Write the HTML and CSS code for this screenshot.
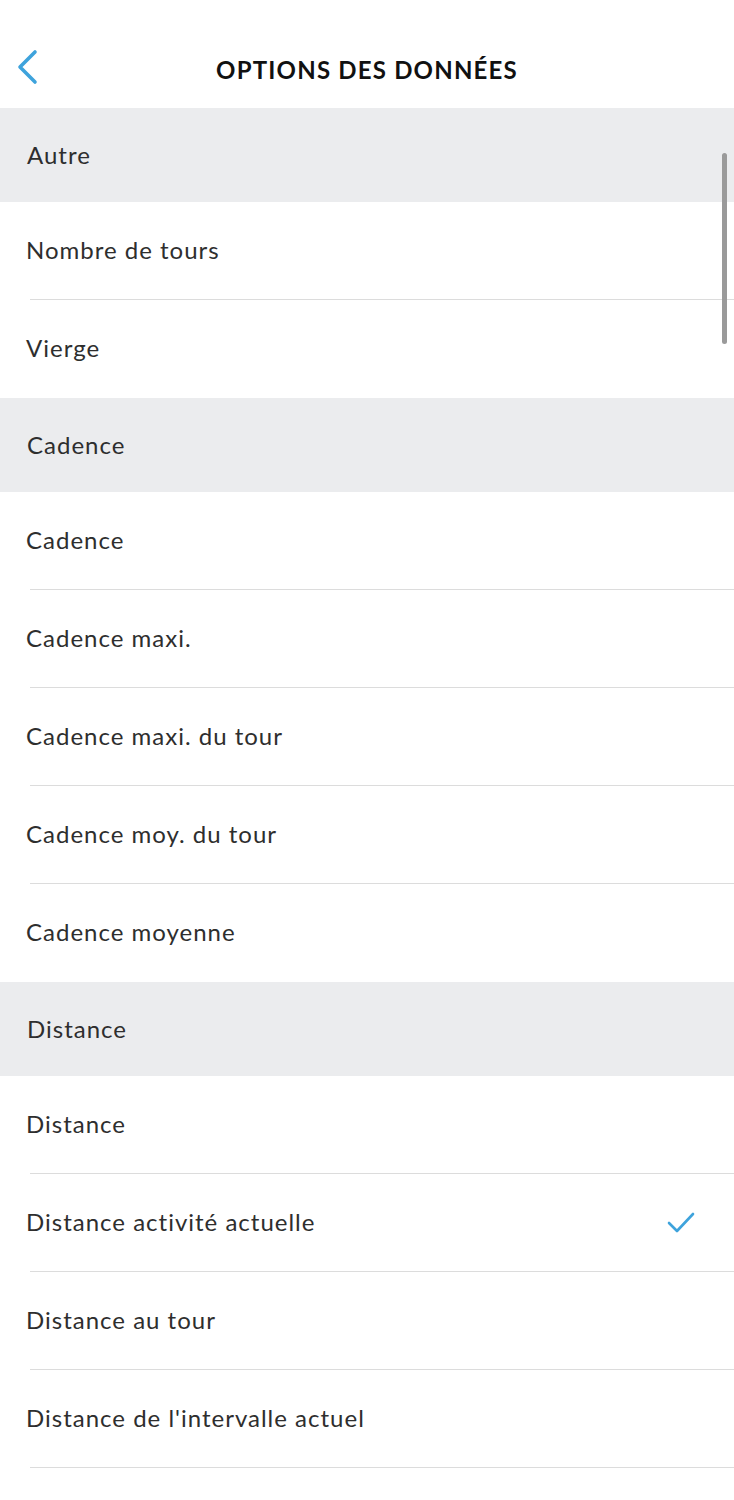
FILE: index.html
```html
<!DOCTYPE html>
<html lang="fr">
<head>
<meta charset="utf-8">
<link rel="stylesheet" href="styles.css">
</head>
<body>
<div class="screen">
  <header class="topbar">
    <svg class="back" width="24" height="36" viewBox="0 0 24 36"><path d="M20 3 L5 18 L20 33" fill="none" stroke="#3ea3dc" stroke-width="3.6" stroke-linecap="round" stroke-linejoin="round"/></svg>
    <h1 class="title">OPTIONS DES DONNÉES</h1>
  </header>
  <div class="list">
    <div class="section">Autre</div>
    <div class="row">Nombre de tours</div>
    <div class="row last">Vierge</div>
    <div class="section">Cadence</div>
    <div class="row">Cadence</div>
    <div class="row">Cadence maxi.</div>
    <div class="row">Cadence maxi. du tour</div>
    <div class="row">Cadence moy. du tour</div>
    <div class="row last">Cadence moyenne</div>
    <div class="section">Distance</div>
    <div class="row">Distance</div>
    <div class="row checked">Distance activité actuelle
      <svg class="check" width="30" height="24" viewBox="0 0 30 24"><path d="M3 12 L11 20 L27 3" fill="none" stroke="#3ea3dc" stroke-width="2.6" stroke-linecap="round" stroke-linejoin="round"/></svg>
    </div>
    <div class="row">Distance au tour</div>
    <div class="row">Distance de l'intervalle actuel</div>
  </div>
  <div class="scrollbar"></div>
</div>
</body>
</html>
```
FILE: styles.css
```css
html, body { margin: 0; padding: 0; background: #fff; }
.screen {
  position: relative;
  width: 734px;
  height: 1500px;
  overflow: hidden;
  font-family: Lato, "Liberation Sans", sans-serif;
  color: #2e2e2e;
}
.topbar {
  position: relative;
  height: 108px;
  display: flex;
  align-items: center;
  justify-content: center;
}
.back {
  position: absolute;
  left: 15px;
  top: 49px;
}
.title {
  margin: 0;
  font-size: 24px;
  font-weight: 700;
  letter-spacing: 1.2px;
  color: #111;
  padding-top: 31px;
  line-height: 1;
}
.list { display: flex; flex-direction: column; }
.section {
  height: 94px;
  background: #ebecee;
  display: flex;
  align-items: center;
  padding-left: 27px;
  font-size: 24px;
  letter-spacing: 1px;
  padding-bottom: 1px;
  box-sizing: border-box;
}
.row {
  height: 98px;
  margin-left: 30px;
  border-bottom: 1px solid #dcdcdc;
  display: flex;
  align-items: center;
  justify-content: space-between;
  font-size: 24px;
  letter-spacing: 1px;
  padding-right: 38px;
  padding-bottom: 3px;
  box-sizing: border-box;
  text-indent: -4px;
}
.row.last { border-bottom: none; }
.check { margin-top: 4px; }
.scrollbar {
  position: absolute;
  right: 7px;
  top: 153px;
  width: 5px;
  height: 191px;
  border-radius: 3px;
  background: #9a9a9a;
}
```
